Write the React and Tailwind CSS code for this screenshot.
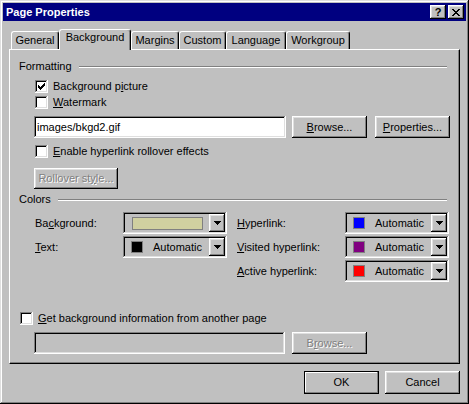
import React from "react";

const raised =
  "shadow-[inset_-1px_-1px_#000,inset_1px_1px_#fff,inset_-2px_-2px_#808080,inset_2px_2px_#dfdfdf]";
const sunken =
  "shadow-[inset_-1px_-1px_#fff,inset_1px_1px_#808080,inset_-2px_-2px_#dfdfdf,inset_2px_2px_#000]";
const disabledText = "text-[#808080] [text-shadow:1px_1px_0_#fff]";

const U = ({ children }) => <span className="underline underline-offset-[1px]">{children}</span>;

// pixel glyphs
const Pixels = ({ rows, w, h, color = "#000" }) => (
  <svg width={w} height={h} viewBox={`0 0 ${w} ${h}`} shapeRendering="crispEdges">
    {rows.map((r, y) =>
      r.split("").map((c, x) =>
        c === "X" ? <rect key={`${x}-${y}`} x={x} y={y} width="1" height="1" fill={color} /> : null
      )
    )}
  </svg>
);

const CHECK = ["......X", ".....XX", "X...XXX", "XX.XXX.", "XXXXX..", ".XXX...", "..X...."];
const ARROW = ["XXXXXXX", ".XXXXX.", "..XXX..", "...X..."];
const CLOSE = ["XX....XX", ".XX..XX.", "..XXXX..", "...XX...", "..XXXX..", ".XX..XX.", "XX....XX"];

const Checkbox = ({ checked, children, className = "" }) => (
  <div className={`flex items-center h-[13px] gap-[5px] ${className}`}>
    <div className={`w-[13px] h-[13px] shrink-0 bg-white ${sunken} flex items-center justify-center`}>
      {checked && <Pixels rows={CHECK} w={7} h={7} />}
    </div>
    <span>{children}</span>
  </div>
);

const Button = ({ children, className = "", disabled, def }) => (
  <div
    className={`h-[22px] w-[75px] shrink-0 bg-[#c0c0c0] flex items-center justify-center ${
      def ? "border border-black shadow-[inset_-1px_-1px_#808080,inset_1px_1px_#fff]" : raised
    } ${disabled ? disabledText : ""} ${className}`}
  >
    {children}
  </div>
);

const Combo = ({ swatch, wide }) => (
  <div className={`flex h-[22px] w-[104px] shrink-0 p-[2px] bg-[#c0c0c0] ${sunken}`}>
    <div className="flex-1 flex items-center">
      {wide ? (
        <div className="ml-[7px] mr-[6px] flex-1 h-[13px] border border-[#808080] bg-[#d0d0a0]" />
      ) : (
        <>
          <div className="ml-[6px] w-[12px] h-[12px] border border-[#808080]" style={{ background: swatch }} />
          <span className="ml-[10px]">Automatic</span>
        </>
      )}
    </div>
    <div className={`w-[16px] h-full ${raised} flex items-center justify-center`}>
      <Pixels rows={ARROW} w={7} h={4} />
    </div>
  </div>
);

const Group = ({ title }) => (
  <div className="flex items-center h-[13px] mr-[4px]">
    <span>{title}</span>
    <div className="flex-1 ml-[7px] border-t border-b border-t-[#808080] border-b-white" />
  </div>
);

const tabs = [
  { t: "General", w: "w-[48px]" },
  { t: "Background", w: "w-[72px]", active: true },
  { t: "Margins", w: "w-[48px]" },
  { t: "Custom", w: "w-[47px]" },
  { t: "Language", w: "w-[60px]" },
  { t: "Workgroup", w: "w-[64px]" },
];

export default function App() {
  return (
    <div
      className="w-[469px] h-[404px] bg-[#c0c0c0] p-[3px] flex flex-col text-[11px] leading-[13px] text-black select-none shadow-[inset_-1px_-1px_#000,inset_1px_1px_#dfdfdf,inset_-2px_-2px_#808080,inset_2px_2px_#fff]"
      style={{ fontFamily: '"Liberation Sans", Arial, sans-serif' }}
    >
      {/* Title bar */}
      <div className="h-[18px] bg-[#000080] flex items-center justify-between pl-[3px] pr-[2px]">
        <span className="text-white font-bold">Page Properties</span>
        <div className="flex gap-[2px]">
          <div className={`w-[16px] h-[14px] bg-[#c0c0c0] ${raised} flex items-center justify-center font-bold leading-none`}>
            ?
          </div>
          <div className={`w-[16px] h-[14px] bg-[#c0c0c0] ${raised} flex items-center justify-center`}>
            <Pixels rows={CLOSE} w={8} h={7} />
          </div>
        </div>
      </div>

      <div className="px-[6px] flex flex-col">
        {/* Tabs */}
        <div className="mt-[8px] h-[20px] flex items-end pl-[2px]">
          {tabs.map((tab) => (
            <div
              key={tab.t}
              className={`${tab.w} flex justify-center items-start border-t border-l border-white border-r border-r-black rounded-t-[3px] shadow-[inset_-1px_0_#808080] bg-[#c0c0c0] ${
                tab.active ? "h-[21px] -mb-[1px] relative z-10 pt-[1px]" : "h-[18px] pt-[2px]"
              }`}
            >
              {tab.t}
            </div>
          ))}
        </div>

        {/* Panel */}
        <div className="h-[315px] border-l border-t border-white border-r border-b border-r-black border-b-black shadow-[inset_-1px_-1px_#808080] pl-[9px] pr-[8px] pt-[10px] flex flex-col">
          <Group title="Formatting" />
          <div className="ml-[16px] flex flex-col">
            <Checkbox checked className="mt-[7px]">
              Background p<U>i</U>cture
            </Checkbox>
            <Checkbox className="mt-[3px]">
              <U>W</U>atermark
            </Checkbox>
          </div>
          <div className="ml-[15px] mt-[7px] flex items-center">
            <div className={`w-[252px] h-[22px] shrink-0 bg-white ${sunken} flex items-center pl-[3px]`}>images/bkgd2.gif</div>
            <Button className="ml-[6px]">
              <span><U>B</U>rowse...</span>
            </Button>
            <Button className="ml-[8px]">
              <span><U>P</U>roperties...</span>
            </Button>
          </div>
          <Checkbox className="ml-[16px] mt-[7px]">
            <U>E</U>nable hyperlink rollover effects
          </Checkbox>
          <Button disabled className="ml-[15px] mt-[10px] !h-[21px] !w-[84px]">
            <span>Rollover st<U>y</U>le...</span>
          </Button>

          <div className="mt-[4px]">
            <Group title="Colors" />
          </div>
          <div className="ml-[16px] mt-[6px] flex flex-col gap-[2px]">
            <div className="flex items-center">
              <span className="w-[88px] shrink-0">Ba<U>c</U>kground:</span>
              <Combo wide />
              <span className="ml-[10px] w-[108px] shrink-0"><U>H</U>yperlink:</span>
              <Combo swatch="#0000ff" />
            </div>
            <div className="flex items-center">
              <span className="w-[88px] shrink-0"><U>T</U>ext:</span>
              <Combo swatch="#000000" />
              <span className="ml-[10px] w-[108px] shrink-0"><U>V</U>isited hyperlink:</span>
              <Combo swatch="#800080" />
            </div>
            <div className="flex items-center">
              <span className="w-[88px] shrink-0" />
              <div className="w-[104px] shrink-0" />
              <span className="ml-[10px] w-[108px] shrink-0"><U>A</U>ctive hyperlink:</span>
              <Combo swatch="#ff0000" />
            </div>
          </div>

          <Checkbox className="ml-[1px] mt-[30px]">
            <U>G</U>et background information from another page
          </Checkbox>
          <div className="ml-[15px] mt-[7px] flex items-center">
            <div className={`w-[251px] h-[22px] shrink-0 bg-[#c0c0c0] ${sunken}`} />
            <Button disabled className="ml-[7px]">
              <span>B<U>r</U>owse...</span>
            </Button>
          </div>
        </div>

        {/* Dialog buttons */}
        <div className="mt-[7px] flex justify-end gap-[6px]">
          <Button def className="!h-[23px]">OK</Button>
          <Button className="!h-[23px]">Cancel</Button>
        </div>
      </div>
    </div>
  );
}
